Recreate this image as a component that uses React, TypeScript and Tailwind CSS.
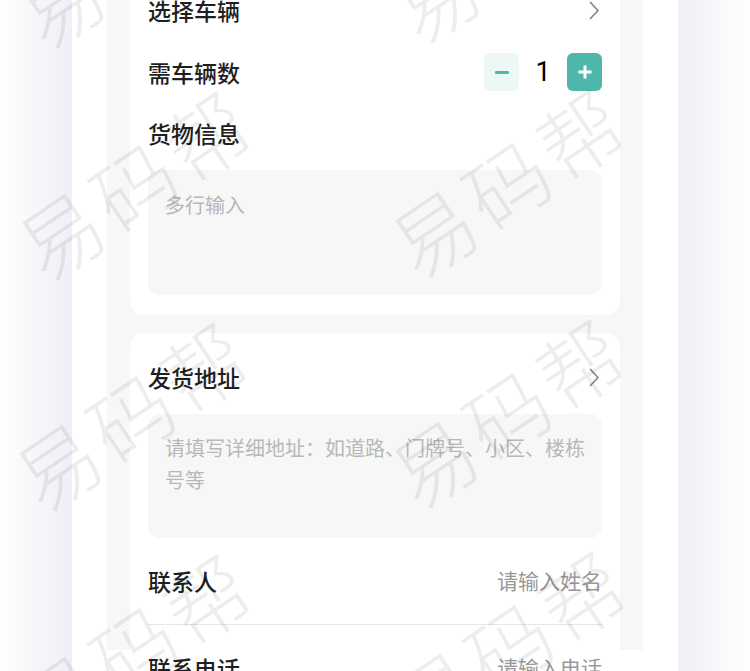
import React from "react";

const font = { fontFamily: '"Noto Sans CJK SC", "Noto Sans", sans-serif' };

function Chevron() {
  return (
    <svg width="11" height="19" viewBox="0 0 11 19" fill="none">
      <path d="M1.5 1.5 L9 9.5 L1.5 17.5" stroke="#858585" strokeWidth="1.7" strokeLinecap="round" strokeLinejoin="round" />
    </svg>
  );
}

const marks = [
  { l: 135, t: -50 },
  { l: 510, t: -55 },
  { l: 135, t: 182 },
  { l: 508, t: 180 },
  { l: 132, t: 413 },
  { l: 508, t: 410 },
  { l: 135, t: 645 },
  { l: 510, t: 642 },
];

export default function App() {
  return (
    <div className="relative w-[750px] h-[671px] overflow-hidden flex bg-white" style={font}>
      <div className="w-[72px] shrink-0 bg-gradient-to-r from-white to-[#efeff5]" />
      <div className="w-[606px] shrink-0 bg-white px-[35px]">
        <div className="h-full bg-[#f7f7f8] px-[23px]">
          {/* card 1 */}
          <div className="-mt-[21px] bg-white rounded-[14px] px-[18px] pb-[20px]">
            <div className="h-[62px] flex items-center justify-between">
              <span className="text-[23px] font-medium text-[#1f1f1f]">选择车辆</span>
              <span className="mr-[2px]"><Chevron /></span>
            </div>
            <div className="h-[62px] flex items-center justify-between">
              <span className="text-[23px] font-medium text-[#1f1f1f]">需车辆数</span>
              <div className="flex items-center">
                <div className="w-[35px] h-[38px] rounded-[6px] bg-[#edf8f6] flex items-center justify-center">
                  <div className="w-[14px] h-[3px] bg-[#4db8a9] rounded-[1px]" />
                </div>
                <span
                  className="w-[48px] text-center text-[27px] font-normal text-black"
                  style={{ fontFamily: 'Roboto, "Noto Sans", sans-serif' }}
                >
                  1
                </span>
                <div className="w-[35px] h-[38px] rounded-[6px] bg-[#4db8a9] flex items-center justify-center">
                  <svg width="16" height="16" viewBox="0 0 16 16">
                    <path d="M8 1.5 V14.5 M1.5 8 H14.5" stroke="#fff" strokeWidth="3" />
                  </svg>
                </div>
              </div>
            </div>
            <div className="h-[60px] flex items-center">
              <span className="text-[23px] font-medium text-[#1f1f1f]">货物信息</span>
            </div>
            <textarea
              readOnly
              placeholder="多行输入"
              className="mt-[7px] block w-full h-[125px] resize-none rounded-[12px] bg-[#f7f7f7] px-[17px] pt-[19px] text-[20px] leading-[32px] outline-none placeholder:text-[#b8b8b8]"
              style={font}
            />
          </div>
          {/* card 2 */}
          <div className="mt-[18px] bg-white rounded-[14px] px-[18px] pt-[14px]">
            <div className="h-[60px] flex items-center justify-between">
              <span className="text-[23px] font-medium text-[#1f1f1f]">发货地址</span>
              <span className="mr-[2px]"><Chevron /></span>
            </div>
            <textarea
              readOnly
              placeholder="请填写详细地址：如道路、门牌号、小区、楼栋号等"
              className="mt-[7px] block w-full h-[124px] resize-none rounded-[12px] bg-[#f7f7f7] pl-[17px] pr-[16px] pt-[18px] text-[20px] leading-[32px] outline-none placeholder:text-[#b8b8b8]"
              style={font}
            />
            <div className="h-[86px] flex items-center justify-between">
              <span className="text-[23px] font-medium text-[#1f1f1f]">联系人</span>
              <input
                readOnly
                placeholder="请输入姓名"
                className="w-[220px] text-right text-[21px] outline-none bg-transparent placeholder:text-[#999999]"
                style={font}
              />
            </div>
            <div className="h-px bg-[#e6e6e6]" />
            <div className="h-[86px] flex items-center justify-between">
              <span className="text-[23px] font-medium text-[#1f1f1f]">联系电话</span>
              <input
                readOnly
                placeholder="请输入电话"
                className="w-[220px] text-right text-[21px] outline-none bg-transparent placeholder:text-[#999999]"
                style={font}
              />
            </div>
          </div>
        </div>
      </div>
      <div className="w-[72px] shrink-0 bg-gradient-to-l from-white to-[#efeff5]" />
      <div className="absolute inset-0 pointer-events-none">
        {marks.map((m, i) => (
          <span
            key={i}
            className="absolute -translate-x-1/2 -translate-y-1/2 -rotate-[34deg] whitespace-nowrap text-[82px] font-light leading-none tracking-[6px] text-black/[0.07]"
            style={{ left: m.l, top: m.t }}
          >
            易码帮
          </span>
        ))}
      </div>
    </div>
  );
}
